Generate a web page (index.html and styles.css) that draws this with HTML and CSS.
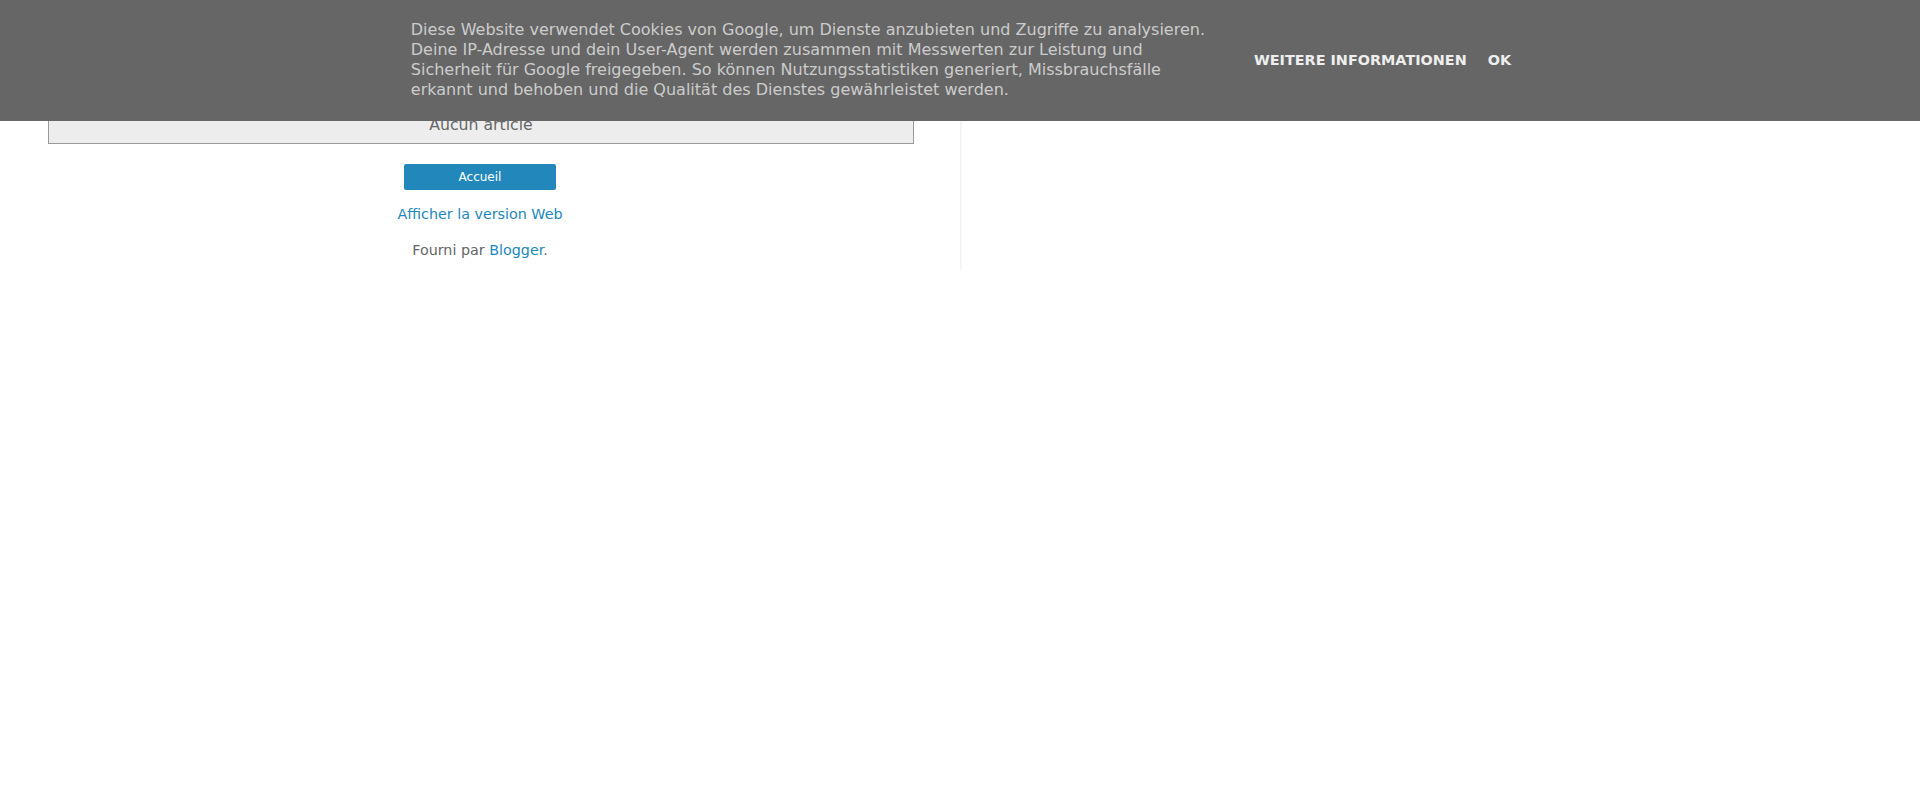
FILE: index.html
```html
<!DOCTYPE html>
<html lang="fr">
<head>
<meta charset="utf-8">
<title>Blog</title>
<link rel="stylesheet" href="styles.css">
</head>
<body>
<div class="content-outer">
  <div class="status-msg">Aucun article</div>
  <div class="mobile-footer">
    <a class="home-button" href="#">Accueil</a>
    <div class="web-link"><a href="#">Afficher la version Web</a></div>
    <div class="powered">Fourni par <a href="#">Blogger</a>.</div>
  </div>
</div>

<div class="cookie-bar">
  <div class="cookie-inner"><span class="cookie-text">Diese Website verwendet Cookies von Google, um Dienste anzubieten und Zugriffe zu analysieren. Deine IP-Adresse und dein User-Agent werden zusammen mit Messwerten zur Leistung und Sicherheit für Google freigegeben. So können Nutzungsstatistiken generiert, Missbrauchsfälle erkannt und behoben und die Qualität des Dienstes gewährleistet werden.</span> <span class="cookie-buttons"><a class="cookie-button" href="#">Weitere Informationen</a> <a class="cookie-button" href="#">Ok</a></span></div>
</div>
</body>
</html>
```

FILE: styles.css
```css
html, body {
  margin: 0;
  padding: 0;
  background: #ffffff;
}

body {
  font-family: "DejaVu Sans", sans-serif;
  color: #666666;
}

a {
  color: #2288bb;
  text-decoration: none;
}

.content-outer {
  width: 960px;
  padding-top: 100px;
  padding-bottom: 11px;
  box-shadow: 0 0 3px rgba(0, 0, 0, 0.15);
  background: #ffffff;
}

.status-msg {
  box-sizing: border-box;
  width: 866px;
  height: 44px;
  margin-left: 48px;
  padding-top: 15px;
  border: 1px solid #999999;
  background: #ededed;
  text-align: center;
  font-size: 15.73px;
  line-height: 18px;
  color: #666666;
}

.mobile-footer {
  text-align: center;
  font-size: 14.3px;
  line-height: 20px;
}

.home-button {
  display: block;
  width: 152px;
  height: 26px;
  margin: 20px auto 0;
  line-height: 26px;
  font-size: 12px;
  color: #ffffff;
  background: #2288bb;
  border-radius: 2px;
}

.web-link {
  margin-top: 14px;
}

.powered {
  margin-top: 16px;
}

.cookie-bar {
  position: fixed;
  top: 0;
  left: 0;
  width: 100%;
  height: 121px;
  box-sizing: border-box;
  padding: 10px 0;
  background: #666666;
  text-align: center;
  z-index: 10;
}

.cookie-inner {
  font-size: 16px;
  line-height: 20px;
}

.cookie-text {
  display: inline-block;
  vertical-align: middle;
  max-width: 800px;
  margin: 10px 20px;
  color: #cccccc;
  text-align: left;
}

.cookie-buttons {
  display: inline-block;
  vertical-align: middle;
  margin: 10px;
}

.cookie-button {
  margin: 0 8px;
  font-size: 14.4px;
  font-weight: bold;
  text-transform: uppercase;
  white-space: nowrap;
  color: #eeeeee;
}
```
